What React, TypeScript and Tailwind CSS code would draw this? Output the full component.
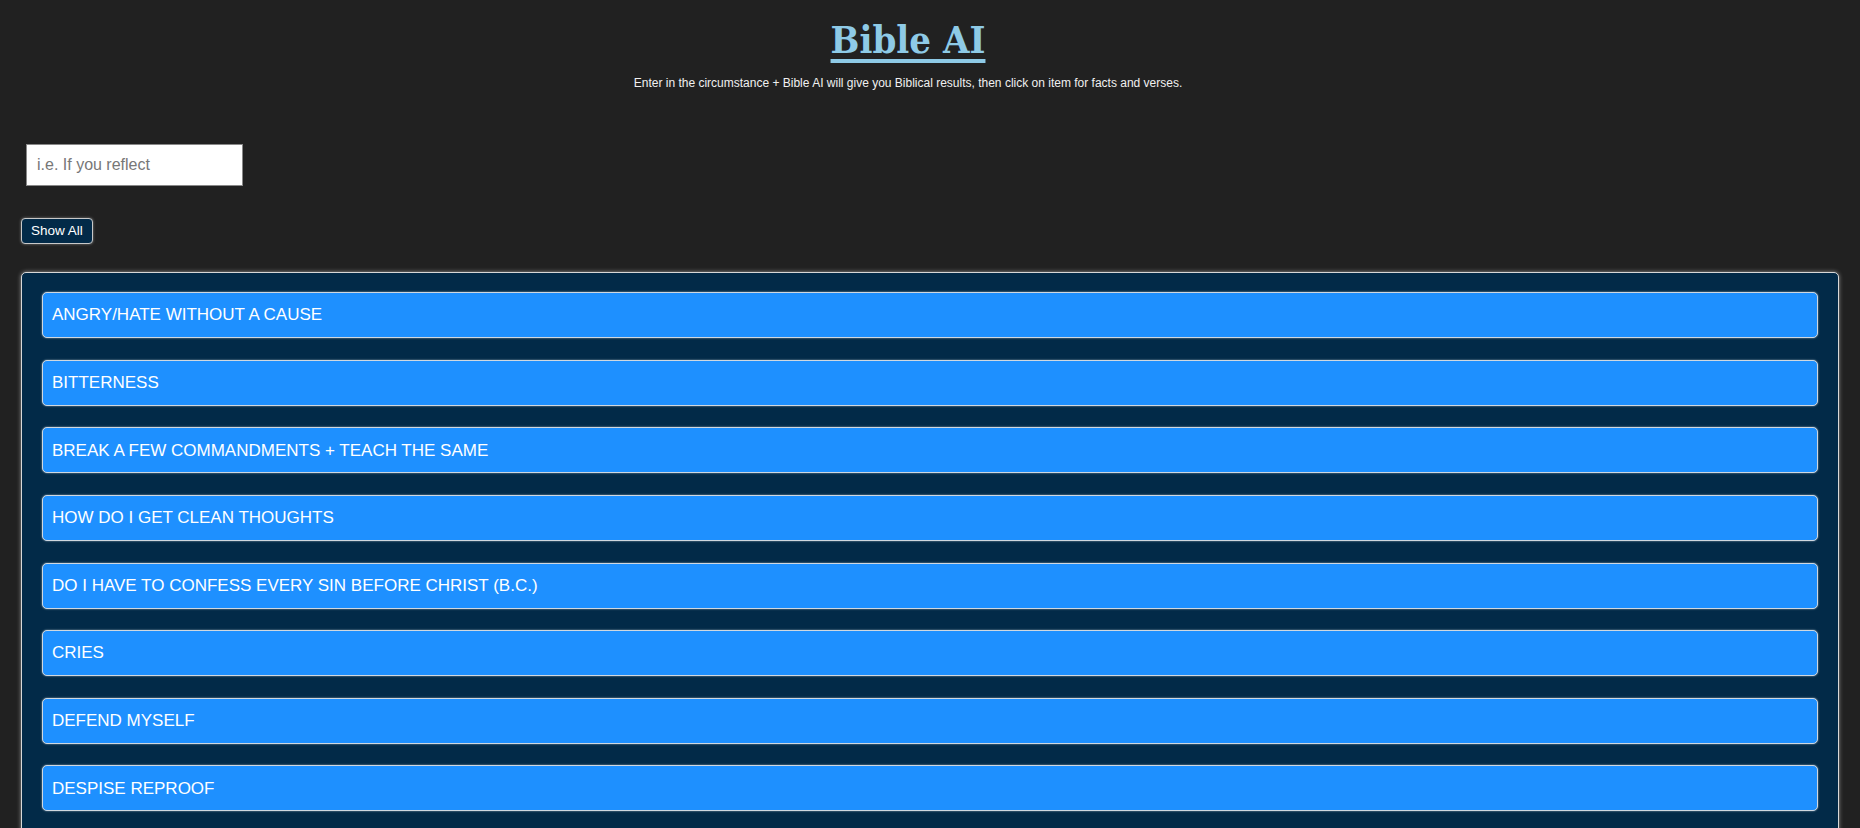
const topics = [
  "ANGRY/HATE WITHOUT A CAUSE",
  "BITTERNESS",
  "BREAK A FEW COMMANDMENTS + TEACH THE SAME",
  "HOW DO I GET CLEAN THOUGHTS",
  "DO I HAVE TO CONFESS EVERY SIN BEFORE CHRIST (B.C.)",
  "CRIES",
  "DEFEND MYSELF",
  "DESPISE REPROOF",
];

export default function App() {
  return (
    <div className="min-h-screen bg-[#212121] font-['Liberation_Sans',Arial,sans-serif] text-white overflow-hidden h-[828px]">
      <header className="w-[1816px] text-center pt-[17px]">
        <h1 className="text-[#8ecae6] text-[38px] leading-[46px] font-bold underline underline-offset-[6px] decoration-[4px] font-['DejaVu_Serif_Condensed','DejaVu_Serif',serif]">
          Bible AI
        </h1>
        <p className="text-[12px] mt-[11px] text-[#f0f0f0]">
          Enter in the circumstance + Bible AI will give you Biblical results, then click on item for facts and verses.
        </p>
      </header>

      <div className="pl-[26px] mt-[52px]">
        <input
          type="text"
          placeholder="i.e. If you reflect"
          className="w-[217px] h-[42px] bg-white border border-[#888] px-[10px] text-[16px] text-black placeholder:text-[#777] outline-none"
        />
      </div>

      <div className="pl-[21px] mt-[32px]">
        <button className="h-[26px] px-[9px] rounded-[4px] bg-[#022a48] border border-[#c8c8c8] text-[13.5px] text-white shadow-[0_0_3px_rgba(255,255,255,0.4)]">
          Show All
        </button>
      </div>

      <div className="mx-[21px] mt-[28px] rounded-t-[5px] bg-[#022a48] border border-[#d8d8d8] shadow-[0_0_4px_rgba(255,255,255,0.5)] px-[20px] pt-[19px] pb-[40px] flex flex-col gap-[21.6px]">
        {topics.map((t) => (
          <div
            key={t}
            className="h-[46px] flex items-center pl-[9px] rounded-[5px] bg-[#1e90ff] border border-[#d0d8e0] text-[17px] text-white shadow-[0_0_2px_rgba(255,255,255,0.6)] cursor-pointer"
          >
            {t}
          </div>
        ))}
      </div>
    </div>
  );
}
